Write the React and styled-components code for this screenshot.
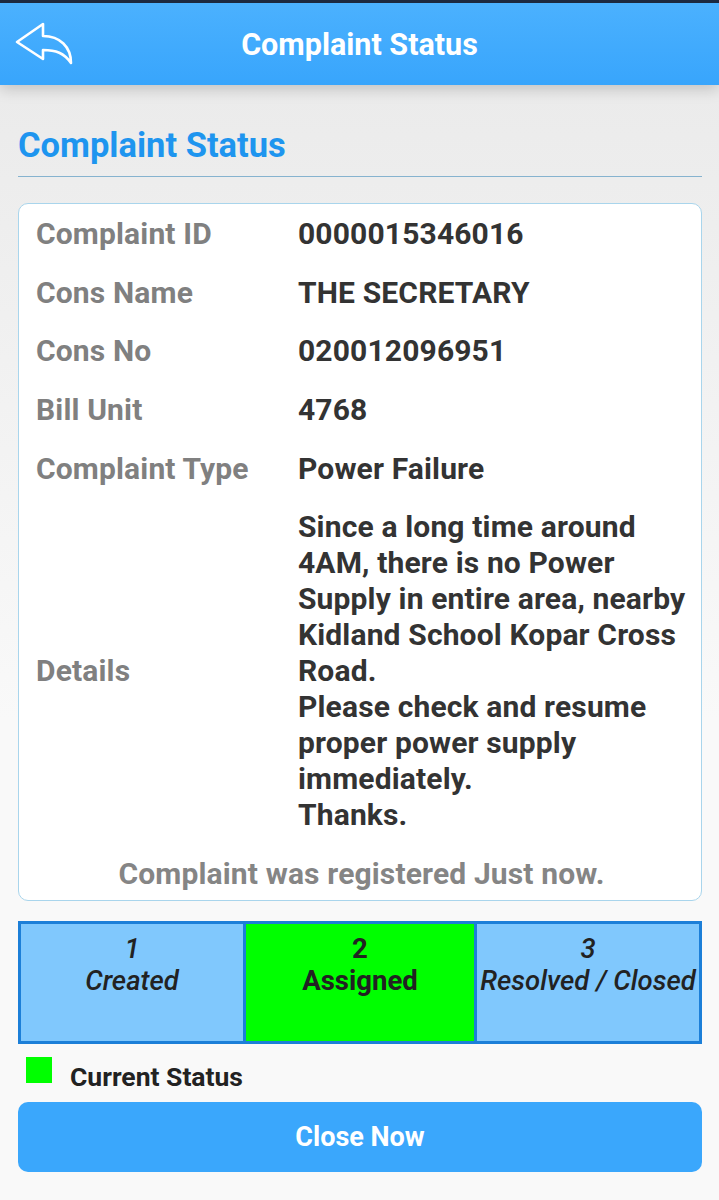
import React from 'react';
import styled, { createGlobalStyle } from 'styled-components';

const GlobalStyle = createGlobalStyle`
  * { box-sizing: border-box; }
  body {
    margin: 0;
    font-family: Roboto, "Liberation Sans", sans-serif;
    background: linear-gradient(#e9e9e9, #f9f9f9 60%);
    min-height: 1200px;
  }
`;

const Page = styled.div`
  width: 719px;
  min-height: 1200px;
`;

const Header = styled.header`
  height: 85px;
  border-top: 3px solid #1c2940;
  background: linear-gradient(#4bb1fe, #38a5fc);
  box-shadow: 0 4px 14px rgba(0, 0, 0, 0.18);
  display: flex;
  align-items: center;
  .back {
    width: 100px;
    padding: 0 0 2px 14px;
    display: flex;
  }
  h1 {
    flex: 1;
    margin: 0 100px 0 0;
    text-align: center;
    color: #fff;
    font-size: 30.5px;
    font-weight: 700;
  }
`;

const Content = styled.main`
  padding: 0 17px 0 18px;
`;

const Heading = styled.h2`
  margin: 0;
  padding: 38px 0 9px;
  color: #1e95ef;
  font-size: 34.5px;
  font-weight: 700;
  line-height: 44px;
  border-bottom: 1.5px solid #86b3cf;
`;

const Card = styled.section`
  margin-top: 26px;
  background: #fff;
  border: 1px solid #a9d5ec;
  border-radius: 10px;
  padding: 1px 14px 8px 17px;
`;

const Row = styled.div`
  display: grid;
  grid-template-columns: 262px 1fr;
  align-items: center;
  padding: 11.3px 0;
  font-size: 30px;
  font-weight: 700;
  letter-spacing: 0.15px;
  line-height: 36px;
  .label { color: #808080; }
  .value { color: #333; }
`;

const Note = styled.p`
  margin: 11px 0 0;
  text-align: center;
  color: #858585;
  font-size: 30px;
  font-weight: 700;
  letter-spacing: 0.15px;
  line-height: 36px;
`;

const Steps = styled.div`
  margin-top: 20px;
  display: grid;
  grid-template-columns: repeat(3, 1fr);
  height: 123px;
`;

const Step = styled.div`
  background: ${p => (p.$current ? '#00ff00' : '#80c8fd')};
  border: 3px solid ${p => (p.$current ? '#00ff00' : '#1c7fd8')};
  border-top-color: #1c7fd8;
  border-bottom-color: #1c7fd8;
  ${p => p.$current && 'border-left: none; border-right: none;'}
  padding-top: 9px;
  text-align: center;
  color: #222;
  font-size: 27.5px;
  line-height: 32px;
  font-style: ${p => (p.$current ? 'normal' : 'italic')};
  font-weight: ${p => (p.$current ? 700 : 500)};
  white-space: nowrap;
`;

const Legend = styled.div`
  display: flex;
  align-items: flex-start;
  gap: 18px;
  padding: 13px 0 0 8px;
  height: 47px;
  color: #222;
  font-size: 26.5px;
  font-weight: 700;
  .swatch {
    width: 26px;
    height: 26px;
    background: #00ff00;
  }
  .text {
    margin-top: 4px;
  }
`;

const CloseButton = styled.button`
  display: block;
  width: 100%;
  margin-top: 11px;
  height: 70px;
  border: none;
  border-radius: 10px;
  background: #3aa7fc;
  color: #fff;
  font-family: inherit;
  font-size: 27px;
  font-weight: 700;
`;

const BackIcon = () => (
  <svg width="60" height="45" viewBox="0 0 60 45" fill="none" stroke="#fff" strokeWidth="2.6" strokeLinejoin="round">
    <path d="M3 21 L29 3 L29 15 C46 15 57 26 57 42 C50 32 42 29 29 29 L29 38 Z" />
  </svg>
);

const rows = [
  ['Complaint ID', '0000015346016'],
  ['Cons Name', 'THE SECRETARY'],
  ['Cons No', '020012096951'],
  ['Bill Unit', '4768'],
  ['Complaint Type', 'Power Failure'],
];

const details = [
  'Since a long time around',
  '4AM, there is no Power',
  'Supply in entire area, nearby',
  'Kidland School Kopar Cross',
  'Road.',
  'Please check and resume',
  'proper power supply',
  'immediately.',
  'Thanks.',
];

const steps = [
  { n: 1, text: 'Created' },
  { n: 2, text: 'Assigned', current: true },
  { n: 3, text: 'Resolved / Closed' },
];

const App = () => {
  return (
    <Page>
      <GlobalStyle />
      <Header>
        <div className="back"><BackIcon /></div>
        <h1>Complaint Status</h1>
      </Header>
      <Content>
        <Heading>Complaint Status</Heading>
        <Card>
          {rows.map(([label, value]) => (
            <Row key={label}>
              <span className="label">{label}</span>
              <span className="value">{value}</span>
            </Row>
          ))}
          <Row>
            <span className="label">Details</span>
            <span className="value">
              {details.map(line => <div key={line}>{line}</div>)}
            </span>
          </Row>
          <Note>Complaint was registered Just now.</Note>
        </Card>
        <Steps>
          {steps.map(s => (
            <Step key={s.n} $current={s.current}>
              <div>{s.n}</div>
              <div>{s.text}</div>
            </Step>
          ))}
        </Steps>
        <Legend>
          <span className="swatch" />
          <span className="text">Current Status</span>
        </Legend>
        <CloseButton>Close Now</CloseButton>
      </Content>
    </Page>
  );
};

export default App;
